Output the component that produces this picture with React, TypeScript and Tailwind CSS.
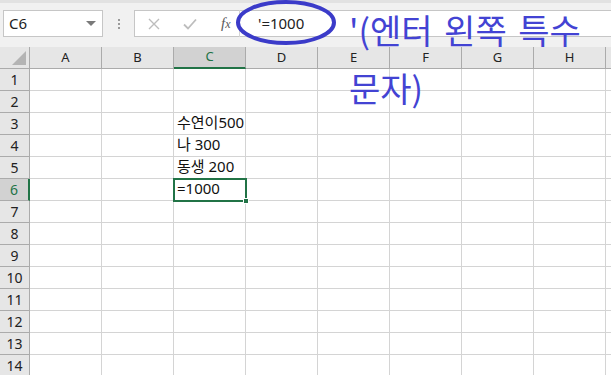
const cols = ['A', 'B', 'C', 'D', 'E', 'F', 'G', 'H'];
const rows = Array.from({ length: 14 }, (_, i) => i + 1);

const cellText: Record<string, string> = {
  'C3': '수연이500',
  'C4': '나 300',
  'C5': '동생 200',
  'C6': '=1000',
};

const font = { fontFamily: '"Noto Sans", "Noto Sans CJK KR", sans-serif' };

function FormulaBar() {
  return (
    <div className="relative h-[47px] bg-[#f1f1f1] border-t-[3px] border-[#e2e2e2]">
      <div className="flex items-start pt-[7px] pl-[3px]">
        {/* name box */}
        <div className="w-[100px] h-[27px] bg-white border border-[#c6c6c6] flex items-center justify-between pl-[5px] pr-[6px]">
          <span className="text-[15px] text-[#222]">C6</span>
          <span className="w-0 h-0 border-l-[5px] border-r-[5px] border-t-[5px] border-l-transparent border-r-transparent border-t-[#7a7a7a]" />
        </div>
        <div className="w-[31px] h-[27px] flex flex-col items-center justify-center gap-[2px]">
          <span className="w-[2px] h-[2px] bg-[#9a9a9a]" />
          <span className="w-[2px] h-[2px] bg-[#9a9a9a]" />
          <span className="w-[2px] h-[2px] bg-[#9a9a9a]" />
        </div>
        {/* formula input */}
        <div className="flex-1 h-[27px] bg-white border border-[#c6c6c6] border-r-0 flex items-center">
          <div className="w-[104px] flex items-center">
            <svg width="12" height="12" viewBox="0 0 12 12" className="ml-[13px]">
              <path d="M1 1 L11 11 M11 1 L1 11" stroke="#bdbdbd" strokeWidth="1.4" fill="none" />
            </svg>
            <svg width="14" height="12" viewBox="0 0 14 12" className="ml-[23px]">
              <path d="M1 6.5 L5 10.5 L13 1.5" stroke="#bdbdbd" strokeWidth="1.8" fill="none" />
            </svg>
            <span
              className="ml-[24px] text-[15px] italic text-[#5a5a5a] leading-none"
              style={{ fontFamily: '"Liberation Serif", serif' }}
            >
              f<span className="text-[12px]">x</span>
            </span>
          </div>
          <div className="w-px h-[27px] bg-[#d4d4d4]" />
          <span className="ml-[18px] text-[15px] text-[#222]">'=1000</span>
        </div>
      </div>
    </div>
  );
}

function HeaderRow() {
  return (
    <div className="flex h-[22px]">
      <div className="relative w-[30px] shrink-0 bg-[#e6e6e6] border-r border-b border-[#ababab]">
        <svg className="absolute right-[3px] bottom-[3px]" width="14" height="14" viewBox="0 0 14 14">
          <path d="M14 0 L14 14 L0 14 Z" fill="#b4b4b4" />
        </svg>
      </div>
      {cols.map((c) => (
        <div
          key={c}
          className={
            c === 'C'
              ? 'w-[72px] shrink-0 flex items-center justify-center text-[13px] text-[#217346] bg-[#d2d2d2] border-r border-[#ababab] border-b-2 border-b-[#217346]'
              : 'w-[72px] shrink-0 flex items-center justify-center text-[13px] text-[#222] bg-[#e6e6e6] border-r border-b border-[#ababab]'
          }
        >
          {c}
        </div>
      ))}
      <div className="flex-1 bg-[#e6e6e6] border-b border-[#ababab]" />
    </div>
  );
}

function Row({ n }: { n: number }) {
  const selected = n === 6;
  return (
    <div className="flex h-[22px]">
      <div
        className={
          selected
            ? 'w-[30px] shrink-0 flex items-center justify-center text-[14px] text-[#217346] bg-[#d2d2d2] border-b border-[#ababab] border-r-2 border-r-[#217346]'
            : 'w-[30px] shrink-0 flex items-center justify-center text-[14px] text-[#222] bg-[#e6e6e6] border-r border-b border-[#ababab]'
        }
      >
        {n}
      </div>
      {cols.map((c) => {
        const t = cellText[`${c}${n}`];
        const sel = selected && c === 'C';
        return (
          <div
            key={c}
            className="relative w-[72px] shrink-0 bg-white border-r border-b border-[#d4d4d4] flex items-center pl-[3px] pb-[2px]"
          >
            {t && <span className="relative z-20 text-[15px] text-[#111] whitespace-nowrap leading-none">{t}</span>}
            {sel && (
              <span className="absolute -left-px -top-px w-[74px] h-[24px] border-2 border-[#217346] z-10">
                <span className="absolute -right-[4px] -bottom-[4px] w-[6px] h-[6px] bg-[#217346] border border-white" />
              </span>
            )}
          </div>
        );
      })}
      <div className="flex-1 bg-white border-b border-[#d4d4d4]" />
    </div>
  );
}

export default function App() {
  return (
    <div className="relative w-[611px] h-[375px] overflow-hidden bg-white" style={font}>
      <FormulaBar />
      <HeaderRow />
      {rows.map((n) => (
        <Row key={n} n={n} />
      ))}

      {/* annotation ellipse */}
      <svg className="absolute left-[235px] top-0" width="104" height="48" viewBox="0 0 104 48">
        <ellipse cx="51" cy="22.5" rx="48" ry="20.5" fill="none" stroke="#3b3bc9" strokeWidth="4" />
      </svg>

      {/* annotation text */}
      <div
        className="absolute left-[349px] top-[1px] text-[34px] leading-[58px] text-[#4343d3] whitespace-nowrap [word-spacing:4px]"
        style={{ fontFamily: '"Noto Sans CJK KR", sans-serif' }}
      >
        '(엔터 왼쪽 특수
        <br />
        문자)
      </div>
    </div>
  );
}
